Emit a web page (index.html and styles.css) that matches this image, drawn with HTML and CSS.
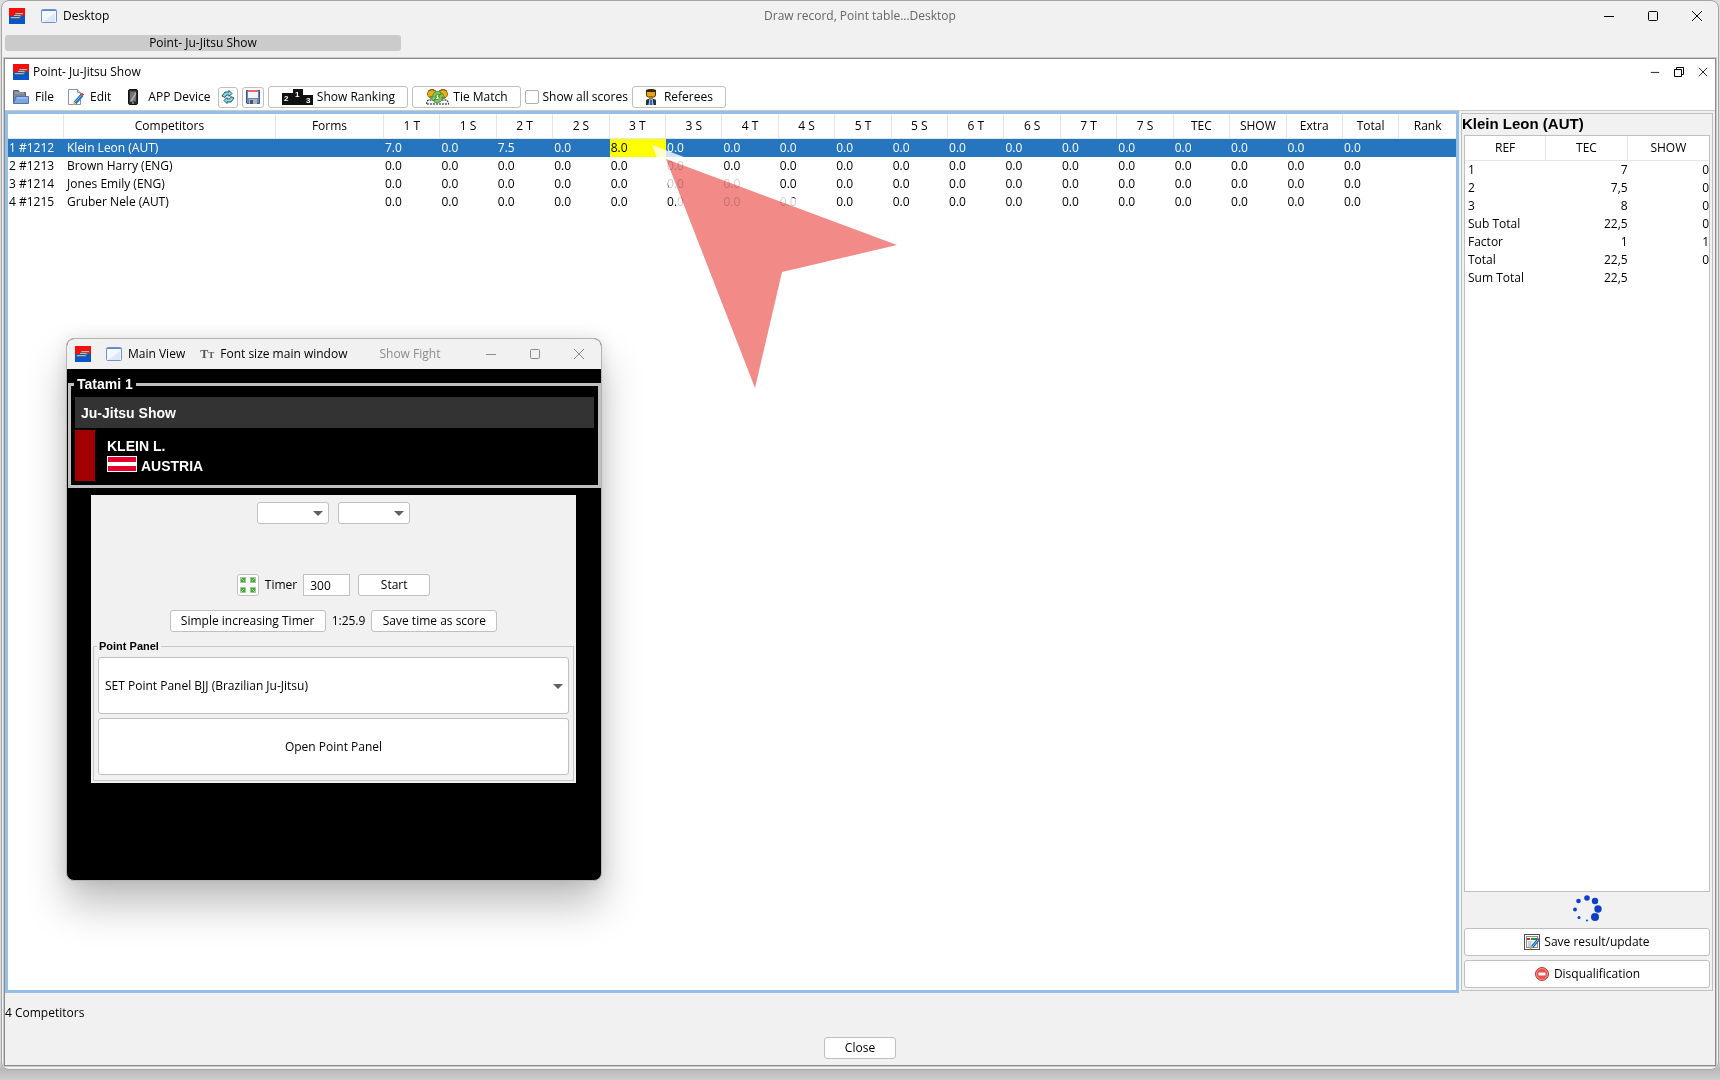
FILE: index.html
```html
<!DOCTYPE html>
<html lang="en">
<head>
    <meta charset="UTF-8">
    <meta name="viewport" content="width=device-width, initial-scale=1.0">
    <title>Draw record, Point table...Desktop</title>
    <link rel="stylesheet" href="styles.css">
</head>
<body>
    <!-- shared icons -->
    <svg class="defs" width="0" height="0">
        <symbol id="logo" viewBox="0 0 16 16">
            <rect width="16" height="9" fill="#f80d0d"/>
            <rect y="8" width="16" height="8" fill="#0a56c8"/>
            <path d="M1 9h8l1-1H5l1-3h8v2H9l4 0-2 4H2z" fill="#6a6468"/>
            <path d="M6.500 5.500H14M5 7.500h6.500M2 9.500h8.500" fill="none" stroke="#b8bab4"/>
        </symbol>
        <symbol id="win" viewBox="0 0 16 14">
            <rect x=".5" y=".5" width="15" height="13" rx="1" fill="#f4f8ff" stroke="#6f93cf"/>
            <path d="M1 1.500h14" stroke="#5b86cc"/>
            <path d="M2 13l12-9v9z" fill="#dde9fb"/>
        </symbol>
        <symbol id="min" viewBox="0 0 12 12"><path d="M1 6.500h10" stroke="currentColor"/></symbol>
        <symbol id="max" viewBox="0 0 12 12"><rect x="1.500" y="1.500" width="9" height="9" rx="1" fill="none" stroke="currentColor"/></symbol>
        <symbol id="restore" viewBox="0 0 10 10"><path d="M.5 2.500h7v7h-7zM2.500 2V.500h7v7H8" fill="none" stroke="currentColor"/></symbol>
        <symbol id="x" viewBox="0 0 12 12"><path d="M1 1l10 10M11 1L1 11" stroke="currentColor"/></symbol>
    </svg>

    <div class="app">
        <header class="title-bar">
            <svg class="logo"><use href="#logo"/></svg>
            <button class="menu-btn desktop-btn"><svg class="win-icon"><use href="#win"/></svg>Desktop</button>
            <h1>Draw record, Point table...Desktop</h1>
            <div class="win-buttons">
                <button aria-label="Minimize"><svg><use href="#min"/></svg></button>
                <button aria-label="Maximize"><svg><use href="#max"/></svg></button>
                <button aria-label="Close window"><svg><use href="#x"/></svg></button>
            </div>
        </header>
        <nav class="tabs"><button>Point- Ju-Jitsu Show</button></nav>

        <main class="frame">
            <div class="frame-top">
                <div class="frame-title">
                    <svg class="logo"><use href="#logo"/></svg>
                    <h2>Point- Ju-Jitsu Show</h2>
                    <div class="win-buttons small">
                        <button aria-label="Minimize"><svg><use href="#min"/></svg></button>
                        <button aria-label="Restore"><svg><use href="#restore"/></svg></button>
                        <button aria-label="Close frame"><svg><use href="#x"/></svg></button>
                    </div>
                </div>
                <div class="toolbar">
                    <button class="menu-btn">
                        <svg width="16" height="16" viewBox="0 0 16 16"><path d="M.5 14V1.500h5l1 2h6V7" fill="#7b8794" stroke="#56616e"/><path d="M2 4h9" stroke="#aab3bc"/><path d="M.5 14.500L3 7.500h12.500v7z" fill="#7ea6dc" stroke="#4a76b4"/><path d="M4 9h10.500" stroke="#b3cdf0"/></svg>File
                    </button>
                    <button class="menu-btn">
                        <svg width="16" height="16" viewBox="0 0 16 16"><path d="M.5.500h9l3 3v12H.5z" fill="#fbfbfd" stroke="#8b93a0"/><path d="M9.500.500v3h3" fill="#dde" stroke="#8b93a0"/><path d="M14 6l-7 8" stroke="#2a6cc4" stroke-width="3.500"/><path d="M13.300 6.200l-6 7" stroke="#7fc0f4" stroke-width="1"/><path d="M12.500 5l1.500-1.300 2 1.800-1.200 1.500z" fill="#d8342c"/><path d="M5.800 12.500l2.500 2L5 16z" fill="#e6b45c"/></svg>Edit
                    </button>
                    <button class="menu-btn phone">
                        <svg width="10" height="16" viewBox="0 0 10 16"><rect x=".5" y=".5" width="9" height="15" rx="1.500" fill="#2a2a2a" stroke="#111"/><rect x="2" y="2.500" width="6" height="10" fill="#6e7476"/><path d="M2 12.500l6-10v3L4 12.500z" fill="#aab0b0"/><rect x="4" y="13.500" width="2" height="1" fill="#ccc"/></svg>APP Device
                    </button>
                    <button class="btn icon-btn" aria-label="Refresh">
                        <svg width="14" height="14" viewBox="0 0 14 14"><path d="M1 6l3-4h4V.500l3 3-3 3V5H5.500L4 7.500zM13 8l-3 4H6v1.500l-3-3 3-3V9h2.500L10 6.500z" fill="#8fd3dc" stroke="#17586c"/></svg>
                    </button>
                    <button class="btn icon-btn save" aria-label="Save">
                        <svg width="14" height="14" viewBox="0 0 14 14"><path d="M.5.500h13v13H1l-.5-.5z" fill="#6c86b4" stroke="#3d5788"/><rect x="2" width="10" height="8" fill="#f3f3f8"/><rect x="2" width="10" height="2" fill="#e8696b"/><rect x="3" y="9" width="8" height="5" fill="#a9b2bd"/><rect x="4" y="10" width="3" height="4" fill="#4a566c"/></svg>
                    </button>
                    <button class="btn ranking">
                        <svg width="31" height="16" viewBox="0 0 31 16"><path d="M0 4h11V0h10v6h10v10H0z" fill="#111"/><g class="podium"><text x="2" y="12">2</text><text x="13" y="8">1</text><text x="24" y="14">3</text></g></svg>Show Ranking
                    </button>
                    <button class="btn tie">
                        <svg width="23" height="16" viewBox="0 0 23 16"><circle cx="6" cy="5" r="4.500" fill="#e6b01c" stroke="#9c6b08"/><circle cx="17" cy="5" r="4.500" fill="#e6b01c" stroke="#9c6b08"/><path d="M2 2q4-3 8 0M13 2q4-3 8 0" stroke="#7b5210" fill="none"/><path d="M0 15l2-4h19l2 4z" fill="#f4f4f4" stroke="#111" stroke-dasharray="2 1"/><path d="M15 3C10 1 6 4 7 8l-3-1 3 5 4-4-2 0c0-2 3-3 5-2zM8 13c5 2 9-1 8-5l3 1-3-5-4 4h2c0 2-3 3-5 2z" fill="#7bc95b" stroke="#39802b" stroke-width=".7"/></svg>Tie Match
                    </button>
                    <label class="check"><input type="checkbox">Show all scores</label>
                    <button class="btn referees">
                        <svg width="12" height="16" viewBox="0 0 12 16"><rect x="1.500" y="1" width="9" height="7" rx="2" fill="#e5a41c" stroke="#4c3208"/><path d="M1 3V1q5-2 10 0v2z" fill="#3a2508"/><rect x="4" y="8" width="4" height="2" fill="#b57910"/><path d="M1 16v-5l2-1h6l2 1v5z" fill="#2b3138"/><path d="M4.500 10h3l1 6h-5z" fill="#dbe9fa"/><path d="M5 10.500h2l.5 5.500h-3z" fill="#2468c8"/></svg>Referees
                    </button>
                </div>
            </div>

            <div class="content">
                <section class="score-pane">
                    <table class="scores">
                        <colgroup><col class="c-no"><col class="c-name"><col class="c-forms"></colgroup>
                        <thead>
                            <tr><th></th><th>Competitors</th><th>Forms</th><th>1 T</th><th>1 S</th><th>2 T</th><th>2 S</th><th>3 T</th><th>3 S</th><th>4 T</th><th>4 S</th><th>5 T</th><th>5 S</th><th>6 T</th><th>6 S</th><th>7 T</th><th>7 S</th><th>TEC</th><th>SHOW</th><th>Extra</th><th>Total</th><th>Rank</th></tr>
                        </thead>
                        <tbody>
                            <tr class="selected"><td>1 #1212</td><td>Klein Leon (AUT)</td><td></td><td>7.0</td><td>0.0</td><td>7.5</td><td>0.0</td><td class="current">8.0</td><td>0.0</td><td>0.0</td><td>0.0</td><td>0.0</td><td>0.0</td><td>0.0</td><td>0.0</td><td>0.0</td><td>0.0</td><td>0.0</td><td>0.0</td><td>0.0</td><td>0.0</td><td></td></tr>
                            <tr><td>2 #1213</td><td>Brown Harry (ENG)</td><td></td><td>0.0</td><td>0.0</td><td>0.0</td><td>0.0</td><td>0.0</td><td>0.0</td><td>0.0</td><td>0.0</td><td>0.0</td><td>0.0</td><td>0.0</td><td>0.0</td><td>0.0</td><td>0.0</td><td>0.0</td><td>0.0</td><td>0.0</td><td>0.0</td><td></td></tr>
                            <tr><td>3 #1214</td><td>Jones Emily (ENG)</td><td></td><td>0.0</td><td>0.0</td><td>0.0</td><td>0.0</td><td>0.0</td><td>0.0</td><td>0.0</td><td>0.0</td><td>0.0</td><td>0.0</td><td>0.0</td><td>0.0</td><td>0.0</td><td>0.0</td><td>0.0</td><td>0.0</td><td>0.0</td><td>0.0</td><td></td></tr>
                            <tr><td>4 #1215</td><td>Gruber Nele (AUT)</td><td></td><td>0.0</td><td>0.0</td><td>0.0</td><td>0.0</td><td>0.0</td><td>0.0</td><td>0.0</td><td>0.0</td><td>0.0</td><td>0.0</td><td>0.0</td><td>0.0</td><td>0.0</td><td>0.0</td><td>0.0</td><td>0.0</td><td>0.0</td><td>0.0</td><td></td></tr>
                        </tbody>
                    </table>
                    <!-- pointer to the score being edited -->
                    <svg class="pointer" width="260" height="250" viewBox="0 0 260 250">
                        <path class="halo" d="M0 0L258 97 130 127 98 244z"/>
                        <path class="arrow" d="M14 14L245 100 130 127 103 243z"/>
                    </svg>
                </section>

                <aside class="detail">
                    <h3>Klein Leon (AUT)</h3>
                    <div class="ref-box">
                        <table class="refs">
                            <thead><tr><th>REF</th><th>TEC</th><th>SHOW</th></tr></thead>
                            <tbody>
                                <tr><td>1</td><td>7</td><td>0</td></tr>
                                <tr><td>2</td><td>7,5</td><td>0</td></tr>
                                <tr><td>3</td><td>8</td><td>0</td></tr>
                                <tr><td>Sub Total</td><td>22,5</td><td>0</td></tr>
                                <tr><td>Factor</td><td>1</td><td>1</td></tr>
                                <tr><td>Total</td><td>22,5</td><td>0</td></tr>
                                <tr><td>Sum Total</td><td>22,5</td><td></td></tr>
                            </tbody>
                        </table>
                    </div>
                    <svg class="spinner" width="30" height="30" viewBox="0 0 30 30" fill="#0d3fc8">
                        <circle cx="15" cy="4" r="2.800"/><circle cx="23" cy="7" r="3.200"/><circle cx="26" cy="15" r="3.700"/><circle cx="23" cy="23" r="4"/><circle cx="15" cy="26.500" r="1"/><circle cx="7" cy="23.500" r="1.500"/><circle cx="3" cy="15.500" r="1.900"/><circle cx="6.500" cy="7" r="2.300"/>
                    </svg>
                    <button class="btn wide">
                        <svg width="16" height="16" viewBox="0 0 16 16"><rect x=".5" y=".5" width="15" height="15" fill="#fff" stroke="#4a5058"/><rect x="2.500" y="2.500" width="11" height="11" fill="#f1f4f6" stroke="#8a9097"/><path d="M3 5h3" stroke="#e02020" stroke-width="2"/><path d="M7 5h6" stroke="#25982b" stroke-width="2"/><path d="M4 8h4M4 10h3M4 12h3" stroke="#aab"/><path d="M14.500 5.500L8 13" stroke="#1e67bd" stroke-width="3"/><path d="M14 6L8 13" stroke="#85c5f5"/><path d="M14 4l2 1.500-1 1.500-2-1.800z" fill="#df392d"/><path d="M6.500 12l2.500 2-3.500 1.500z" fill="#e4a93d"/></svg>Save result/update
                    </button>
                    <button class="btn wide">
                        <svg width="16" height="16" viewBox="0 0 16 16"><circle cx="8" cy="8" r="6.500" fill="#e8514c" stroke="#c33c38"/><circle cx="8" cy="8" r="5.500" fill="none" stroke="#f3a09c" stroke-width=".8"/><rect x="4.500" y="6.500" width="7" height="3" rx=".5" fill="#fff"/></svg>Disqualification
                    </button>
                </aside>
            </div>

            <footer class="status">
                <p>4 Competitors</p>
                <button class="btn close-btn">Close</button>
            </footer>
        </main>
    </div>

    <section class="fight">
        <header class="fight-bar">
            <svg class="logo"><use href="#logo"/></svg>
            <button class="menu-btn"><svg class="win-icon"><use href="#win"/></svg>Main View</button>
            <button class="menu-btn font-btn"><span class="tt">T<small>T</small></span>Font size main window</button>
            <span class="fight-name">Show Fight</span>
            <div class="win-buttons">
                <button aria-label="Minimize"><svg><use href="#min"/></svg></button>
                <button aria-label="Maximize"><svg><use href="#max"/></svg></button>
                <button aria-label="Close fight"><svg><use href="#x"/></svg></button>
            </div>
        </header>
        <fieldset class="tatami">
            <legend>Tatami 1</legend>
            <div class="category">Ju-Jitsu Show</div>
            <div class="fighter">
                <div class="side"></div>
                <div class="who">
                    <div>KLEIN L.</div>
                    <div class="nation"><span class="flag"></span>AUSTRIA</div>
                </div>
            </div>
        </fieldset>
        <div class="controls">
            <div class="row selects">
                <div class="combo"><select aria-label="First choice"><option></option></select></div>
                <div class="combo"><select aria-label="Second choice"><option></option></select></div>
            </div>
            <div class="row timer">
                <button class="btn icon-btn" aria-label="Full screen">
                    <svg width="18" height="18" viewBox="0 0 18 18"><g fill="#4f9d45" stroke="#8fc985" stroke-dasharray="2 1"><rect x="1.500" y="1.500" width="5" height="5"/><rect x="11.500" y="1.500" width="5" height="5"/><rect x="1.500" y="11.500" width="5" height="5"/><rect x="11.500" y="11.500" width="5" height="5"/></g><path d="M2 2l3 3M16 2l-3 3M2 16l3-3M16 16l-3-3" stroke="#a8d8a0"/></svg>
                </button>
                <label for="seconds">Timer</label>
                <input id="seconds" type="text" value="300">
                <button class="btn start">Start</button>
            </div>
            <div class="row">
                <button class="btn simple">Simple increasing Timer</button>
                <span>1:25.9</span>
                <button class="btn save-time">Save time as score</button>
            </div>
            <fieldset class="point-panel">
                <legend>Point Panel</legend>
                <div class="combo big"><select aria-label="Point panel"><option>SET Point Panel BJJ (Brazilian Ju-Jitsu)</option></select></div>
                <button class="btn big">Open Point Panel</button>
            </fieldset>
        </div>
    </section>
</body>
</html>
```
FILE: styles.css
```css
* {
    box-sizing: border-box;
}
body {
    margin: 0;
    height: 100vh;
    padding: 0 1px 10px;
    font: 12px/16px "Open Sans", "Noto Sans", sans-serif;
    color: #000;
    background: linear-gradient(to bottom, #dcdcdc 0, #dcdcdc calc(100% - 20px), #b8b8b8 calc(100% - 11px), #cecece 100%);
}
h1, h2, h3, p {
    margin: 0;
    font-size: inherit;
    font-weight: normal;
}
button, input, select {
    font: inherit;
    color: inherit;
    margin: 0;
}
button {
    padding: 0;
    border: 0;
    background: none;
    white-space: nowrap;
}
svg {
    flex: none;
}
.defs {
    position: absolute;
}
.logo {
    width: 16px;
    height: 16px;
}
.win-icon {
    width: 16px;
    height: 14px;
}
.btn {
    display: flex;
    align-items: center;
    justify-content: center;
    gap: 4px;
    height: 22px;
    background: #fff;
    border: 1px solid #c0c0c0;
    border-radius: 3px;
}
.menu-btn {
    display: flex;
    align-items: center;
    gap: 6px;
}

/* main window */
.app {
    height: 100%;
    display: flex;
    flex-direction: column;
    padding: 0 2px 3px;
    background: #f1f1f1;
    border: 1px solid #a6a6a6;
    border-radius: 8px;
}
.title-bar {
    display: grid;
    grid-template-columns: 32px 120px 1fr 144px;
    align-items: center;
    height: 30px;
    padding: 0 13px 0 5px;
}
.title-bar h1 {
    color: #666;
    text-align: center;
}
.win-buttons {
    display: flex;
    justify-content: flex-end;
    gap: 32px;
    margin-left: auto;
}
.win-buttons button, .win-buttons svg {
    display: block;
    width: 12px;
    height: 12px;
}
.tabs {
    height: 27px;
    padding: 4px 1px 0;
}
.tabs button {
    display: block;
    width: 396px;
    height: 16px;
    line-height: 16px;
    background: #cbcbcb;
    border-radius: 3px;
}
.frame {
    flex: 1;
    min-height: 0;
    display: flex;
    flex-direction: column;
    border: 1px solid #8c8c8c;
    outline: 1px solid #c8c8c8;
}
.frame-top {
    background: #fff;
    border-bottom: 1px solid #c8c8c8;
}
.frame-title {
    display: flex;
    align-items: center;
    gap: 4px;
    height: 26px;
    padding: 0 7px 0 8px;
}
.win-buttons.small {
    gap: 14px;
}
.small button, .small svg {
    width: 10px;
    height: 10px;
}
.toolbar {
    display: flex;
    align-items: center;
    gap: 4px;
    height: 25px;
    padding: 0 8px 1px;
}
.toolbar .menu-btn {
    margin-right: 10px;
}
.toolbar .phone {
    gap: 10px;
    margin-right: 4px;
    margin-left: 3px;
}
.toolbar .icon-btn {
    width: 20px;
    height: 21px;
}
.toolbar .save {
    width: 22px;
}
.podium text {
    font: bold 8px "Liberation Sans", sans-serif;
    fill: #fff;
}
.ranking {
    width: 140px;
}
.tie {
    width: 109px;
}
.referees {
    width: 94px;
}
.referees svg {
    margin-right: 3px;
}
.check {
    display: flex;
    align-items: center;
    gap: 3px;
}
.check input {
    appearance: none;
    width: 14px;
    height: 14px;
    background: #fff;
    border: 1px solid #b0b0b0;
    border-radius: 2px;
}

/* score table and referee panel */
.content {
    flex: 1;
    min-height: 0;
    display: flex;
    gap: 2px;
    padding-right: 2px;
}
.score-pane {
    position: relative;
    flex: 1;
    background: #fff;
    border: 3px solid #94bfe8;
}
table {
    width: 100%;
    table-layout: fixed;
    border-collapse: separate;
    border-spacing: 0;
}
th {
    height: 25px;
    padding: 0;
    font-weight: normal;
    border-right: 1px solid #e5e5e5;
    border-bottom: 1px solid #e5e5e5;
    background: #fff;
}
th:last-child {
    border-right: 0;
}
td {
    height: 18px;
    padding: 0 1px;
    line-height: 18px;
    white-space: nowrap;
}
td:nth-child(2) {
    padding-left: 3px;
}
.c-no {
    width: 56px;
}
.c-name {
    width: 212px;
}
.c-forms {
    width: 108px;
}
.selected td {
    color: #fff;
    background: #2675bf;
}
.selected .current {
    color: #000;
    background: #ff0;
}
.pointer {
    position: absolute;
    left: 644px;
    top: 31px;
}
.halo {
    fill: #fff;
    opacity: .8;
}
.arrow {
    fill: #f28a88;
    mix-blend-mode: multiply;
}
.detail {
    width: 252px;
    display: flex;
    flex-direction: column;
    margin: 2px 0;
    padding: 0 2px 2px;
    border: 1px solid #c0c0c0;
}
.detail h3 {
    height: 21px;
    font: bold 15px/20px "Liberation Sans", Arial, sans-serif;
    margin-left: -2px;
}
.ref-box {
    flex: 1;
    background: #fff;
    border: 1px solid #c0c0c0;
}
.refs td {
    padding: 0;
    text-align: right;
}
.refs td:first-child {
    text-align: left;
    padding-left: 3px;
}
.spinner {
    margin: 2px auto 4px;
}
.wide {
    height: 28px;
    margin-bottom: 4px;
}
.wide:last-child {
    margin-bottom: 0;
}
.status {
    height: 72px;
    padding-top: 12px;
}
.close-btn {
    width: 72px;
    margin: 16px auto 0;
}

/* floating fight window */
.fight {
    position: absolute;
    left: 66px;
    top: 338px;
    width: 536px;
    height: 543px;
    overflow: hidden;
    background: #000;
    border: 1px solid #b4b4b4;
    border-radius: 8px;
    box-shadow: 0 24px 40px rgba(0, 0, 0, .25), 0 0 16px rgba(0, 0, 0, .1);
}
.fight-bar {
    display: flex;
    align-items: center;
    height: 30px;
    padding: 0 16px 0 8px;
    background: #f1f1f1;
}
.fight-bar .menu-btn {
    margin-left: 15px;
}
.tt {
    font: bold 12px/16px "Liberation Serif", serif;
    color: #555;
}
.tt small {
    font-size: 9px;
}
.fight-name {
    margin-left: 32px;
    color: #8c8c8c;
}
.fight-bar .win-buttons {
    color: #8c8c8c;
}
.tatami {
    margin: 5px 0 7px 1px;
    padding: 3px 4px 4px;
    border: 3px solid #c0c0c0;
    color: #fff;
    font: bold 14px/20px "Liberation Sans", Arial, sans-serif;
}
.tatami legend {
    margin-left: -1px;
    padding: 0 3px;
}
.category {
    height: 31px;
    line-height: 32px;
    padding-left: 6px;
    background: #333;
}
.fighter {
    display: flex;
    gap: 12px;
    margin-top: 2px;
}
.side {
    width: 20px;
    height: 51px;
    background: #a00000;
}
.who {
    padding-top: 6px;
}
.nation {
    display: flex;
    gap: 4px;
}
.flag {
    width: 30px;
    height: 16px;
    border: 1px solid #fff;
    background: linear-gradient(#e4002b 5px, #fff 5px, #fff 9px, #e4002b 9px);
}
.controls {
    margin: 0 25px 0 24px;
    padding: 7px 2px 2px;
    background: #f1f1f1;
}
.row {
    display: flex;
    justify-content: center;
    align-items: center;
    gap: 6px;
}
.selects {
    gap: 9px;
}
.combo {
    position: relative;
    width: 72px;
    height: 22px;
}
.combo select {
    appearance: none;
    width: 100%;
    height: 100%;
    padding: 0 6px;
    background: #fff;
    border: 1px solid #c0c0c0;
    border-radius: 3px;
}
.combo::after {
    content: "";
    position: absolute;
    right: 6px;
    top: calc(50% - 2px);
    border: 5px solid transparent;
    border-top-color: #606060;
    border-bottom: 0;
}
.timer {
    margin: 50px 0 14px;
}
.timer .icon-btn {
    width: 22px;
}
.timer input {
    width: 47px;
    height: 22px;
    padding: 0 6px;
    border: 1px solid #c0c0c0;
}
.start {
    width: 72px;
    margin-left: 2px;
}
.simple {
    width: 156px;
}
.save-time {
    width: 126px;
}
.point-panel {
    margin: 8px 0 0;
    padding: 4px 4px 5px;
    border: 1px solid #c8c8c8;
}
.point-panel legend {
    padding: 0 2px;
    margin-left: -1px;
    font: bold 11px/13px "Liberation Sans", Arial, sans-serif;
}
.big {
    width: 100%;
    height: 57px;
}
.combo.big {
    margin-bottom: 4px;
}
```
